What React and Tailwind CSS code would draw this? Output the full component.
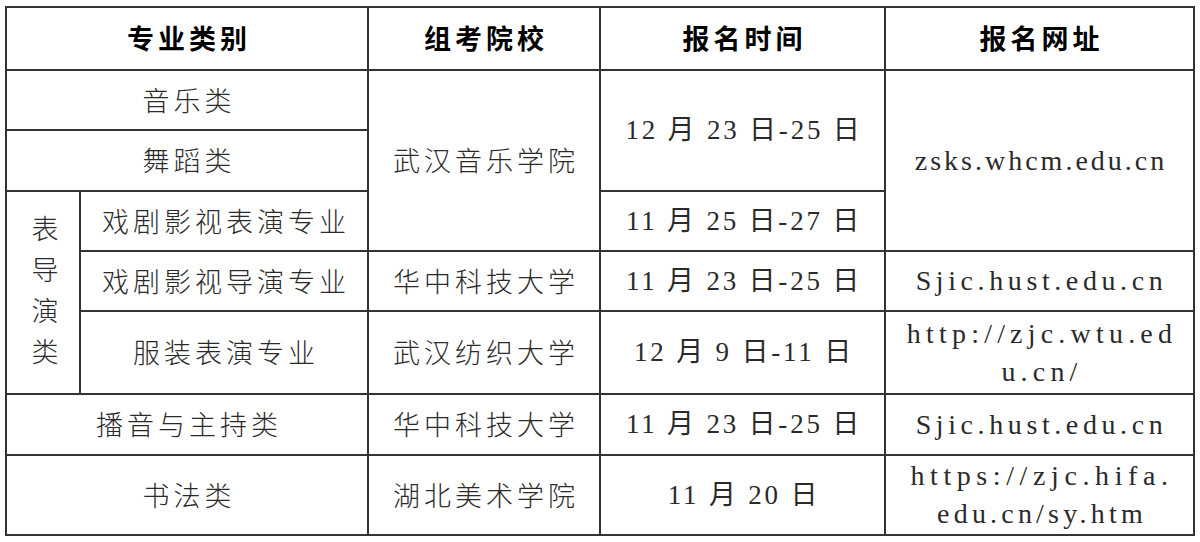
const cell = 'border-2 border-[#333] text-center align-middle p-0'
const cjk = "font-['Noto_Sans_CJK_SC',sans-serif] text-[27px] tracking-[4px] pl-[4px] text-[#2a2a2a] font-light"
const head = "font-['Noto_Sans_CJK_SC',sans-serif] text-[27px] tracking-[4px] pl-[4px] text-black font-bold"
const date = "font-['Liberation_Serif','Noto_Sans_CJK_SC',serif] text-[27px] tracking-[2.8px] pl-[3px] text-[#2a2a2a]"
const url = "font-['Liberation_Serif',serif] text-[28px] leading-[38px] text-[#2a2a2a] whitespace-nowrap"

export default function App() {
  return (
    <div className="w-[1200px] h-[542px] bg-white pl-[5px] pt-[6px]">
      <table className="table-fixed border-collapse w-[1188px] border-2 border-[#333]">
        <colgroup>
          <col className="w-[74px]" />
          <col className="w-[288px]" />
          <col className="w-[232px]" />
          <col className="w-[285px]" />
          <col className="w-[309px]" />
        </colgroup>
        <tbody>
          <tr className="h-[63px]">
            <td colSpan={2} className={`${cell} ${head}`}>专业类别</td>
            <td className={`${cell} ${head}`}>组考院校</td>
            <td className={`${cell} ${head}`}>报名时间</td>
            <td className={`${cell} ${head}`}>报名网址</td>
          </tr>
          <tr className="h-[60px]">
            <td colSpan={2} className={`${cell} ${cjk}`}>音乐类</td>
            <td rowSpan={3} className={`${cell} ${cjk}`}>武汉音乐学院</td>
            <td rowSpan={2} className={`${cell} ${date}`}>12 月 23 日-25 日</td>
            <td rowSpan={3} className={`${cell} ${url} tracking-[3px] pl-[3px]`}>zsks.whcm.edu.cn</td>
          </tr>
          <tr className="h-[61px]">
            <td colSpan={2} className={`${cell} ${cjk}`}>舞蹈类</td>
          </tr>
          <tr className="h-[60px]">
            <td rowSpan={3} className={`${cell} ${cjk} leading-[41px] pl-0 pb-[8px]`}>
              <div className="flex flex-col items-center tracking-normal">
                <span>表</span>
                <span>导</span>
                <span>演</span>
                <span>类</span>
              </div>
            </td>
            <td className={`${cell} ${cjk}`}>戏剧影视表演专业</td>
            <td className={`${cell} ${date}`}>11 月 25 日-27 日</td>
          </tr>
          <tr className="h-[60px]">
            <td className={`${cell} ${cjk}`}>戏剧影视导演专业</td>
            <td className={`${cell} ${cjk}`}>华中科技大学</td>
            <td className={`${cell} ${date}`}>11 月 23 日-25 日</td>
            <td className={`${cell} ${url} tracking-[4.6px] pl-[4px]`}>Sjic.hust.edu.cn</td>
          </tr>
          <tr className="h-[83px]">
            <td className={`${cell} ${cjk}`}>服装表演专业</td>
            <td className={`${cell} ${cjk}`}>武汉纺织大学</td>
            <td className={`${cell} ${date}`}>12 月 9 日-11 日</td>
            <td className={`${cell} ${url} pl-[5px]`}>
              <div className="tracking-[5.2px]">http://zjc.wtu.ed</div>
              <div className="tracking-[5.2px]">u.cn/</div>
            </td>
          </tr>
          <tr className="h-[61px]">
            <td colSpan={2} className={`${cell} ${cjk}`}>播音与主持类</td>
            <td className={`${cell} ${cjk}`}>华中科技大学</td>
            <td className={`${cell} ${date}`}>11 月 23 日-25 日</td>
            <td className={`${cell} ${url} tracking-[4.6px] pl-[4px]`}>Sjic.hust.edu.cn</td>
          </tr>
          <tr className="h-[80px]">
            <td colSpan={2} className={`${cell} ${cjk}`}>书法类</td>
            <td className={`${cell} ${cjk}`}>湖北美术学院</td>
            <td className={`${cell} ${date}`}>11 月 20 日</td>
            <td className={`${cell} ${url} pl-[5px]`}>
              <div className="tracking-[5.6px]">https://zjc.hifa.</div>
              <div className="tracking-[4.2px]">edu.cn/sy.htm</div>
            </td>
          </tr>
        </tbody>
      </table>
    </div>
  )
}
